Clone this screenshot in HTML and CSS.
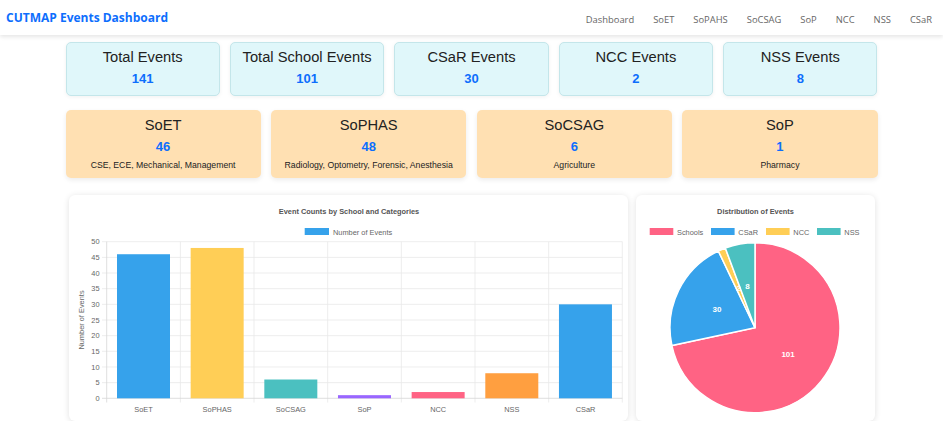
FILE: index.html
```html
<!DOCTYPE html>
<html lang="en">
<head>
<meta charset="utf-8">
<title>CUTMAP Events Dashboard</title>
<link rel="stylesheet" href="styles.css">
</head>
<body>
<nav class="navbar">
  <a class="brand" href="#">CUTMAP Events Dashboard</a>
  <ul class="nav-links">
    <li><a href="#">Dashboard</a></li>
    <li><a href="#">SoET</a></li>
    <li><a href="#">SoPAHS</a></li>
    <li><a href="#">SoCSAG</a></li>
    <li><a href="#">SoP</a></li>
    <li><a href="#">NCC</a></li>
    <li><a href="#">NSS</a></li>
    <li><a href="#">CSaR</a></li>
  </ul>
</nav>

<main class="container">
  <section class="stats-row stats-main">
    <div class="stat-card"><h3 class="stat-title">Total Events</h3><p class="stat-value">141</p></div>
    <div class="stat-card"><h3 class="stat-title">Total School Events</h3><p class="stat-value">101</p></div>
    <div class="stat-card"><h3 class="stat-title">CSaR Events</h3><p class="stat-value">30</p></div>
    <div class="stat-card"><h3 class="stat-title">NCC Events</h3><p class="stat-value">2</p></div>
    <div class="stat-card"><h3 class="stat-title">NSS Events</h3><p class="stat-value">8</p></div>
  </section>

  <section class="stats-row stats-schools">
    <div class="school-card"><h3 class="stat-title">SoET</h3><p class="stat-value">46</p><p class="school-desc">CSE, ECE, Mechanical, Management</p></div>
    <div class="school-card"><h3 class="stat-title">SoPHAS</h3><p class="stat-value">48</p><p class="school-desc">Radiology, Optometry, Forensic, Anesthesia</p></div>
    <div class="school-card"><h3 class="stat-title">SoCSAG</h3><p class="stat-value">6</p><p class="school-desc">Agriculture</p></div>
    <div class="school-card"><h3 class="stat-title">SoP</h3><p class="stat-value">1</p><p class="school-desc">Pharmacy</p></div>
  </section>

  <section class="charts-row">
    <div class="chart-card">
      <svg class="chart" width="559" height="226" viewBox="0 0 559 226">
        <text class="chart-title" x="280" y="18.5" text-anchor="middle">Event Counts by School and Categories</text>
        <rect x="235.7" y="33" width="24.3" height="7" fill="#36A2EB"/>
        <text class="chart-text" x="264" y="39.6">Number of Events</text>

        <g class="grid">
          <line x1="33" y1="46.7" x2="553.3" y2="46.7"/>
          <line x1="33" y1="62.36" x2="553.3" y2="62.36"/>
          <line x1="33" y1="78.02" x2="553.3" y2="78.02"/>
          <line x1="33" y1="93.68" x2="553.3" y2="93.68"/>
          <line x1="33" y1="109.34" x2="553.3" y2="109.34"/>
          <line x1="33" y1="125" x2="553.3" y2="125"/>
          <line x1="33" y1="140.66" x2="553.3" y2="140.66"/>
          <line x1="33" y1="156.32" x2="553.3" y2="156.32"/>
          <line x1="33" y1="171.98" x2="553.3" y2="171.98"/>
          <line x1="33" y1="187.64" x2="553.3" y2="187.64"/>
          <line x1="111.36" y1="46.7" x2="111.36" y2="207.5"/>
          <line x1="185.02" y1="46.7" x2="185.02" y2="207.5"/>
          <line x1="258.68" y1="46.7" x2="258.68" y2="207.5"/>
          <line x1="332.34" y1="46.7" x2="332.34" y2="207.5"/>
          <line x1="406" y1="46.7" x2="406" y2="207.5"/>
          <line x1="479.66" y1="46.7" x2="479.66" y2="207.5"/>
          <line x1="553.32" y1="46.7" x2="553.32" y2="207.5"/>
        </g>
        <g class="axis">
          <line x1="37.7" y1="46.7" x2="37.7" y2="207.5"/>
          <line x1="33" y1="203.3" x2="553.3" y2="203.3"/>
        </g>

        <g class="chart-text" text-anchor="end">
          <text x="30.5" y="49.4">50</text>
          <text x="30.5" y="65.1">45</text>
          <text x="30.5" y="80.7">40</text>
          <text x="30.5" y="96.4">35</text>
          <text x="30.5" y="112">30</text>
          <text x="30.5" y="127.7">25</text>
          <text x="30.5" y="143.4">20</text>
          <text x="30.5" y="159">15</text>
          <text x="30.5" y="174.7">10</text>
          <text x="30.5" y="190.3">5</text>
          <text x="30.5" y="206">0</text>
        </g>
        <text class="chart-text" transform="translate(15.3 125) rotate(-90)" text-anchor="middle">Number of Events</text>

        <g class="bars">
          <rect x="48" y="59.23" width="53" height="144.07" fill="#36A2EB"/>
          <rect x="121.66" y="52.96" width="53" height="150.34" fill="#FFCE56"/>
          <rect x="195.32" y="184.51" width="53" height="18.79" fill="#4BC0C0"/>
          <rect x="268.98" y="200.17" width="53" height="3.13" fill="#9966FF"/>
          <rect x="342.64" y="197.04" width="53" height="6.26" fill="#FF6384"/>
          <rect x="416.3" y="178.24" width="53" height="25.06" fill="#FF9F40"/>
          <rect x="489.96" y="109.34" width="53" height="93.96" fill="#36A2EB"/>
        </g>

        <g class="chart-text" text-anchor="middle">
          <text x="74.53" y="217">SoET</text>
          <text x="148.19" y="217">SoPHAS</text>
          <text x="221.85" y="217">SoCSAG</text>
          <text x="295.51" y="217">SoP</text>
          <text x="369.17" y="217">NCC</text>
          <text x="442.83" y="217">NSS</text>
          <text x="516.49" y="217">CSaR</text>
        </g>
      </svg>
    </div>

    <div class="chart-card">
      <svg class="chart" width="239" height="226" viewBox="0 0 239 226">
        <text class="chart-title" x="119.5" y="18.5" text-anchor="middle">Distribution of Events</text>
        <g class="chart-text">
          <rect x="13.7" y="33" width="23.6" height="7" fill="#FF6384"/>
          <text x="41" y="39.6">Schools</text>
          <rect x="75" y="33" width="23.6" height="7" fill="#36A2EB"/>
          <text x="102.3" y="39.6">CSaR</text>
          <rect x="130" y="33" width="23.6" height="7" fill="#FFCE56"/>
          <text x="157.3" y="39.6">NCC</text>
          <rect x="181" y="33" width="23.6" height="7" fill="#4BC0C0"/>
          <text x="208.3" y="39.6">NSS</text>
        </g>
        <g class="slices">
          <path d="M119 132.7 L119 47.7 A85 85 0 1 1 35.9 150.56 Z" fill="#FF6384"/>
          <path d="M119 132.7 L35.9 150.56 A85 85 0 0 1 82.36 56 Z" fill="#36A2EB"/>
          <path d="M119 132.7 L82.36 56 A85 85 0 0 1 89.33 53.05 Z" fill="#FFCE56"/>
          <path d="M119 132.7 L89.33 53.05 A85 85 0 0 1 119 47.7 Z" fill="#4BC0C0"/>
        </g>
        <g class="slice-label" text-anchor="middle">
          <text x="152.1" y="162.2">101</text>
          <text x="80.9" y="116.8">30</text>
          <text x="102.4" y="96.4">2</text>
          <text x="111.5" y="93.7">8</text>
        </g>
      </svg>
    </div>
  </section>
</main>
</body>
</html>
```
FILE: styles.css
```css
* {
  box-sizing: border-box;
}

body {
  margin: 0;
  background: #ffffff;
  font-family: "Liberation Sans", Arial, sans-serif;
  color: #222;
}

/* top navigation */
.navbar {
  height: 35px;
  display: flex;
  align-items: center;
  justify-content: space-between;
  padding: 0 11px 0 6px;
  background: #fff;
  box-shadow: 0 2px 4px rgba(0, 0, 0, 0.1);
}

.brand {
  font-family: "Open Sans", "Noto Sans", sans-serif;
  font-weight: 700;
  font-size: 12px;
  color: #0d6efd;
  text-decoration: none;
}

.nav-links {
  display: flex;
  gap: 19px;
  margin: 0;
  padding: 0;
  list-style: none;
}

.nav-links a {
  font-family: "Open Sans", "Noto Sans", sans-serif;
  font-size: 9.4px;
  color: #666;
  text-decoration: none;
}

/* page body */
.container {
  width: 812px;
  margin: 7px auto 0;
}

.stats-row {
  display: grid;
}

.stats-main {
  grid-template-columns: repeat(5, 1fr);
  gap: 10px;
}

.stats-schools {
  grid-template-columns: repeat(4, 1fr);
  gap: 10.5px;
  margin-top: 14px;
}

.stat-card {
  height: 54px;
  padding-top: 6px;
  text-align: center;
  background: #e0f7fa;
  border: 1px solid #c4e6ea;
  border-radius: 5px;
  box-shadow: 0 1px 4px rgba(0, 0, 0, 0.06);
}

.stat-card .stat-title {
  margin-top: -1px;
}

.school-card {
  height: 68px;
  padding-top: 6px;
  text-align: center;
  background: #ffe0b2;
  border-radius: 5px;
  box-shadow: 0 2px 5px rgba(0, 0, 0, 0.08);
}

.stat-title {
  margin: 0;
  font-size: 14.7px;
  font-weight: 400;
  line-height: 18px;
  color: #222;
}

.stat-value {
  margin: 5px 0 0;
  font-size: 13px;
  font-weight: 700;
  line-height: 16px;
  color: #0d6efd;
}

.school-desc {
  margin: 4px 0 0;
  font-size: 8.7px;
  line-height: 12px;
  color: #222;
}

/* charts */
.charts-row {
  display: grid;
  grid-template-columns: 559px 239px;
  gap: 8px;
  padding: 0 3px;
  margin-top: 17px;
}

.chart-card {
  height: 226px;
  background: #fff;
  border-radius: 6px;
  box-shadow: 0 1px 6px rgba(0, 0, 0, 0.12);
  overflow: hidden;
}

.chart {
  display: block;
  font-family: "Liberation Sans", Arial, sans-serif;
}

.chart-title {
  font-size: 7.4px;
  font-weight: 700;
  fill: #555;
}

.chart-text {
  font-size: 7.4px;
  fill: #666;
}

.grid line {
  stroke: #e8e8e8;
  stroke-width: 0.8;
}

.axis line {
  stroke: #d6d6d6;
  stroke-width: 0.8;
}

.slices path {
  stroke: #fff;
  stroke-width: 1.5;
}

.slice-label {
  font-size: 8px;
  font-weight: 700;
  fill: #fff;
}
```
